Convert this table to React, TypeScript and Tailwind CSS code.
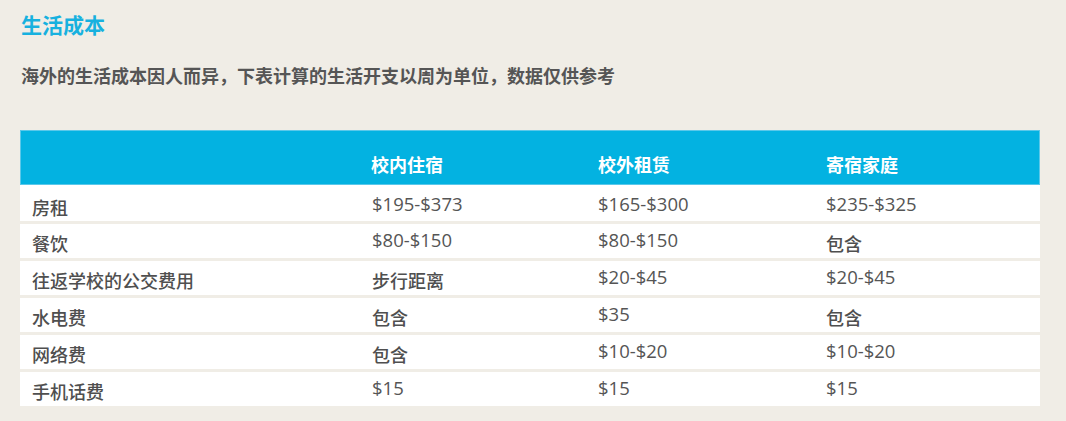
import React from "react";

type Row = { label: string; cells: string[] };

const rows: Row[] = [
  { label: "房租", cells: ["$195-$373", "$165-$300", "$235-$325"] },
  { label: "餐饮", cells: ["$80-$150", "$80-$150", "包含"] },
  { label: "往返学校的公交费用", cells: ["步行距离", "$20-$45", "$20-$45"] },
  { label: "水电费", cells: ["包含", "$35", "包含"] },
  { label: "网络费", cells: ["包含", "$10-$20", "$10-$20"] },
  { label: "手机话费", cells: ["$15", "$15", "$15"] },
];

const isCjk = (s: string) => !s.startsWith("$");

function Cell({ text, first }: { text: string; first: boolean }) {
  const cjk = isCjk(text);
  const pad = cjk ? (first ? "pt-[14px]" : "pt-[11px]") : first ? "pt-[10px]" : "pt-[7px]";
  return (
    <div
      className={`pl-[12px] leading-[18px] ${pad} ${
        cjk ? "text-[18px] font-medium text-[#4f4f4f]" : "text-[18.5px] font-normal text-[#555555]"
      }`}
    >
      {text}
    </div>
  );
}

export default function App() {
  return (
    <div className="min-h-[421px] w-full bg-[#f0ede6] px-[20px] pt-[15px] font-['Open_Sans','Noto_Sans_CJK_SC',sans-serif]">
      <h1 className="pl-[1px] text-[21px] leading-[21px] font-bold text-[#17b1df]">生活成本</h1>
      <p className="mt-[31px] pl-[1px] text-[18px] leading-[18px] font-bold text-[#555555]">
        海外的生活成本因人而异，下表计算的生活开支以周为单位，数据仅供参考
      </p>
      <div className="mt-[45px] w-[1020px]">
        <div className="grid h-[55px] grid-cols-[339px_226px_228px_225px] border border-[#5ac8ea] bg-[#03b2e1] pt-[25px] text-[18px] leading-[18px] font-bold text-white">
          <div></div>
          <div className="pl-[11px]">校内住宿</div>
          <div className="pl-[12px]">校外租赁</div>
          <div className="pl-[12px]">寄宿家庭</div>
        </div>
        <div className="flex flex-col gap-[3px]">
          {rows.map((r, i) => (
            <div
              key={r.label}
              className={`grid grid-cols-[340px_226px_228px_226px] bg-white ${i === 0 ? "h-[36px]" : "h-[34px]"}`}
            >
              <Cell text={r.label} first={i === 0} />
              {r.cells.map((c, j) => (
                <Cell key={j} text={c} first={i === 0} />
              ))}
            </div>
          ))}
        </div>
      </div>
    </div>
  );
}
